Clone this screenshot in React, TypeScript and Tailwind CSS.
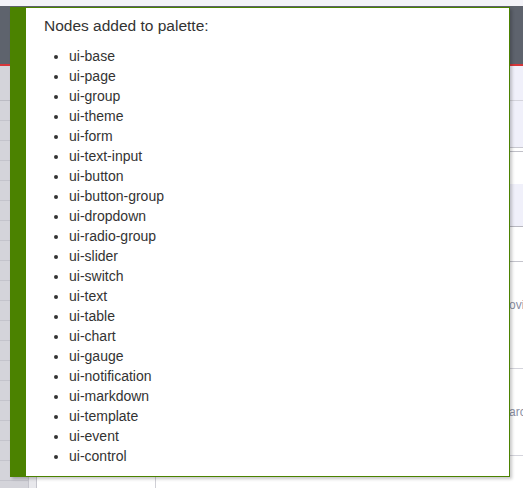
import React from "react";

const items = [
  "ui-base",
  "ui-page",
  "ui-group",
  "ui-theme",
  "ui-form",
  "ui-text-input",
  "ui-button",
  "ui-button-group",
  "ui-dropdown",
  "ui-radio-group",
  "ui-slider",
  "ui-switch",
  "ui-text",
  "ui-table",
  "ui-chart",
  "ui-gauge",
  "ui-notification",
  "ui-markdown",
  "ui-template",
  "ui-event",
  "ui-control",
];

export default function App() {
  const rows = Array.from({ length: 20 });
  return (
    <div
      className="relative w-[523px] h-[488px] overflow-hidden bg-white"
      style={{ fontFamily: '"Liberation Sans", Arial, sans-serif' }}
    >
      {/* background page */}
      <div className="h-[6px] bg-[#f3f3f8]" />
      <div className="h-[58px] bg-[#5e636d]" />
      <div className="h-[2px] bg-[#d6363a]" />
      <div className="flex h-[422px]">
        {/* palette column */}
        <div className="w-[28px] bg-[#d4d4da] flex flex-col">
          <div className="h-[35px] border-b border-[#bcbcc4] shrink-0" />
          {rows.map((_, i) => (
            <div key={i} className="h-[20px] border-b border-[#c4c4cc] shrink-0" />
          ))}
        </div>
        <div className="w-[9px] bg-[#e8e8ec] border-x border-[#c4c4cc]" />
        <div className="w-[119px] bg-white border-r border-[#d0d0d6]" />
        <div className="flex-1 bg-white" />
        {/* sidebar */}
        <div className="w-[13px] flex flex-col overflow-hidden text-[12px] leading-[16px] text-[#8a90a4]">
          <div className="h-[35px] bg-[#f0f0fa] border-b border-[#d4d4dc] shrink-0" />
          <div className="h-[47px] bg-[#f0f0fa] border-b border-[#c8c8d0] shrink-0" />
          <div className="h-[4px] bg-white border-b border-[#c0c0c8] shrink-0" />
          <div className="h-[32px] bg-white shrink-0" />
          <div className="h-[43px] bg-[#f0f0fa] border-b border-[#b8b8c0] shrink-0" />
          <div className="h-[35px] bg-white border-b border-[#c4c4cc] shrink-0" />
          <div className="h-[107px] bg-white border-b border-[#d4d4dc] shrink-0 whitespace-nowrap pt-[35px]">
            <span className="-ml-[1px]">ovides</span>
          </div>
          <div className="h-[87px] bg-white border-b border-[#d4d4dc] shrink-0 whitespace-nowrap pt-[35px]">
            <span className="-ml-[1px]">arch</span>
          </div>
          <div className="flex-1 bg-white" />
        </div>
      </div>

      {/* notification overlay */}
      <div className="absolute left-[10px] top-[7px] w-[500px] h-[470px] bg-white border border-[#4b8200] border-l-[16px] shadow-[2px_2px_3px_rgba(0,0,0,0.22)] text-[#333333] text-[14px] leading-[20px] pl-[18px] pt-[8px]">
        <div className="text-[15.5px]">Nodes added to palette:</div>
        <ul className="list-disc pl-[25px] mt-[10px]">
          {items.map((it) => (
            <li key={it}>{it}</li>
          ))}
        </ul>
      </div>
    </div>
  );
}
